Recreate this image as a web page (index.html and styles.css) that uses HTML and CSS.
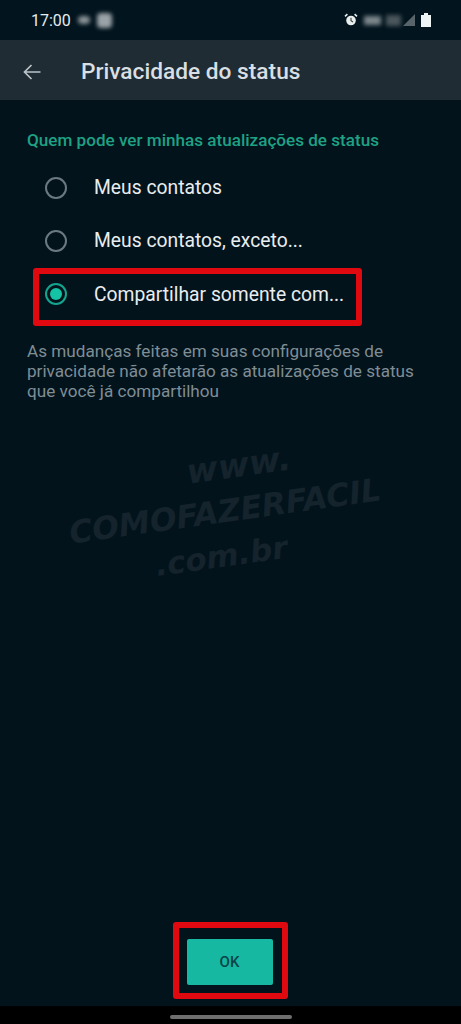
FILE: index.html
```html
<!DOCTYPE html>
<html lang="pt-BR">
  <head>
    <meta charset="UTF-8" />
    <meta name="viewport" content="width=device-width, initial-scale=1.0" />
    <title>Privacidade do status</title>
    <link rel="stylesheet" href="styles.css">
  </head>
  <body>
    <div class="screen">
      <div class="status-bar">
        <div class="status-left">
          <span class="clock">17:00</span>
          <span class="blur-dot small"></span>
          <span class="blur-dot"></span>
        </div>
        <div class="status-right">
          <svg class="alarm" viewBox="0 0 14 14" width="14" height="14">
            <circle cx="7" cy="7.5" r="4.8" fill="#e8eeee" />
            <path d="M7 4.8V7.8L9 9" fill="none" stroke="#33413f" stroke-width="1.1" />
            <path d="M1 3.4L3.4 1.2M13 3.4L10.6 1.2" stroke="#e8eeee" stroke-width="1.6" />
          </svg>
          <span class="blur-wifi"></span>
          <span class="blur-signal"></span>
          <svg viewBox="0 0 12 12" width="12" height="12">
            <path d="M0 12L12 0V12Z" fill="#59646a" />
          </svg>
          <svg class="battery" viewBox="0 0 10 14" width="10" height="14">
            <path d="M0 14V2H3V0H7V2H10V14Z" fill="#eef3f3" />
          </svg>
        </div>
      </div>

      <div class="top-bar">
        <svg class="back" viewBox="0 0 18 16" width="18" height="16">
          <path d="M17.5 8H1.5M8.5 1L1.5 8L8.5 15" fill="none" stroke="#b9c3c8" stroke-width="1.7" />
        </svg>
        <h2>Privacidade do status</h2>
      </div>

      <div class="content">
        <p class="section-title">Quem pode ver minhas atualizações de status</p>
        <div class="option">
          <span class="radio"></span>
          <span class="option-label">Meus contatos</span>
        </div>
        <div class="option">
          <span class="radio"></span>
          <span class="option-label">Meus contatos, exceto...</span>
        </div>
        <div class="option selected">
          <span class="radio"></span>
          <span class="option-label">Compartilhar somente com...</span>
        </div>
        <p class="note">As mudanças feitas em suas configurações de privacidade não afetarão as atualizações de status que você já compartilhou</p>
        <div class="watermark">
          <span class="mark-www">www.</span>
          <span class="mark-name">COMOFAZERFACIL</span>
          <span class="mark-br">.com.br</span>
        </div>
      </div>

      <div class="footer">
        <div class="ok-frame">
          <button class="ok-btn">OK</button>
        </div>
      </div>

      <div class="nav-bar">
        <span class="nav-handle"></span>
      </div>
    </div>
  </body>
</html>
```

FILE: styles.css
```css
* {
  box-sizing: border-box;
}

body {
  margin: 0;
  font-family: Roboto, "Liberation Sans", sans-serif;
  background-color: #03131c;
}

.screen {
  width: 461px;
  height: 1024px;
  display: flex;
  flex-direction: column;
  overflow: hidden;
}

.status-bar {
  height: 40px;
  flex-shrink: 0;
  padding: 0 30px 0 31px;
  display: flex;
  justify-content: space-between;
  align-items: center;
  background-color: #02141e;
  color: #e6ebed;
}

.status-left,
.status-right {
  display: flex;
  align-items: center;
}

.clock {
  font-size: 16px;
  margin-right: 7px;
}

.blur-dot {
  width: 15px;
  height: 15px;
  border-radius: 4px;
  background-color: #9aa3a7;
  filter: blur(2px);
}

.blur-dot.small {
  width: 12px;
  height: 8px;
  margin-right: 7px;
  background-color: #8b9498;
}

.alarm {
  margin-right: 6px;
}

.blur-wifi {
  width: 17px;
  height: 9px;
  margin-right: 5px;
  background-color: #7c878c;
  filter: blur(2px);
}

.blur-signal {
  width: 15px;
  height: 11px;
  margin-right: 2px;
  background-color: #4a565c;
  filter: blur(2px);
}

.battery {
  margin-left: 6px;
}

.top-bar {
  height: 60px;
  flex-shrink: 0;
  padding: 3px 0 0 23px;
  display: flex;
  align-items: center;
  background-color: #1f2c34;
}

.top-bar h2 {
  margin: 0 0 0 40px;
  font-size: 22.7px;
  font-weight: 500;
  color: #d9dfe3;
}

.content {
  flex: 1;
  position: relative;
  padding: 31px 27px 0;
}

.section-title {
  margin: 0 0 12px;
  font-size: 17.1px;
  line-height: 18px;
  font-weight: 500;
  color: #1fa184;
}

.option {
  height: 53px;
  display: flex;
  align-items: center;
  padding-left: 18px;
  color: #e9edef;
  font-size: 19.3px;
}

.option-label {
  margin-left: 27px;
}

.radio {
  width: 22px;
  height: 22px;
  flex-shrink: 0;
  border: 2px solid #6b7a82;
  border-radius: 50%;
}

.option.selected {
  width: 329px;
  height: 58px;
  margin: 1px 0 0 6px;
  padding: 0 0 6px 6px;
  border: 6px solid #e0090f;
  border-radius: 3px;
}

.option.selected .radio {
  border-color: #14a58f;
  padding: 3px;
  background-color: #14c2a5;
  background-clip: content-box;
}

.note {
  margin: 15px 0 0;
  font-size: 17.15px;
  line-height: 20px;
  color: #7f8d95;
}

/* faint site watermark over the empty part of the page */
.watermark {
  position: absolute;
  left: 60px;
  top: 345px;
  width: 330px;
  display: flex;
  flex-direction: column;
  align-items: center;
  transform: rotate(-8deg);
  font-family: "DejaVu Sans", sans-serif;
  font-style: italic;
  font-weight: 700;
  color: #14232c;
}

.mark-www {
  margin-left: 40px;
  font-size: 34px;
  line-height: 44px;
}

.mark-name {
  font-size: 31.5px;
  line-height: 44px;
  white-space: nowrap;
}

.mark-br {
  margin-right: 20px;
  font-size: 31px;
  line-height: 44px;
}

.footer {
  flex-shrink: 0;
  display: flex;
  justify-content: center;
  padding-right: 1px;
  padding-bottom: 7px;
}

.ok-frame {
  width: 115px;
  height: 77px;
  padding: 11px 8px;
  border: 6px solid #e0090f;
  border-radius: 3px;
}

.ok-btn {
  display: block;
  width: 86px;
  height: 46px;
  border: none;
  border-radius: 2px;
  background-color: #16b8a2;
  color: #0a4449;
  font-family: inherit;
  font-size: 15px;
  font-weight: 500;
  cursor: pointer;
}

.nav-bar {
  height: 18px;
  flex-shrink: 0;
  display: flex;
  justify-content: center;
  background-color: #000;
  padding-top: 9px;
}

.nav-handle {
  width: 122px;
  height: 4px;
  border-radius: 2px;
  background-color: #6e6e6e;
}
```
